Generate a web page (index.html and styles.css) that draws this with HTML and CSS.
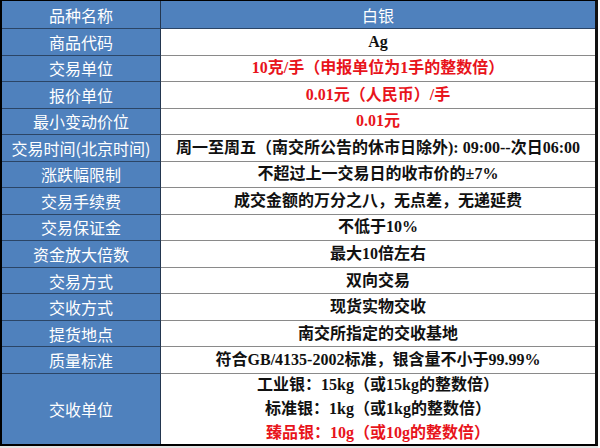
FILE: index.html
```html
<!DOCTYPE html>
<html lang="zh-CN">
<head>
<meta charset="utf-8">
<title>白银 合约</title>
<link rel="stylesheet" href="styles.css">
</head>
<body>
<div class="sheet">
  <div class="spec">
    <div class="k head">品种名称</div><div class="v head">白银</div>
    <div class="k">商品代码</div><div class="v">Ag</div>
    <div class="k">交易单位</div><div class="v red">10克/手（申报单位为1手的整数倍）</div>
    <div class="k">报价单位</div><div class="v red">0.01元（人民币）/手</div>
    <div class="k">最小变动价位</div><div class="v red">0.01元</div>
    <div class="k">交易时间(北京时间)</div><div class="v">周一至周五（南交所公告的休市日除外): 09:00--次日06:00</div>
    <div class="k">涨跌幅限制</div><div class="v">不超过上一交易日的收市价的±7%</div>
    <div class="k">交易手续费</div><div class="v">成交金额的万分之八，无点差，无递延费</div>
    <div class="k">交易保证金</div><div class="v">不低于10%</div>
    <div class="k">资金放大倍数</div><div class="v">最大10倍左右</div>
    <div class="k">交易方式</div><div class="v">双向交易</div>
    <div class="k">交收方式</div><div class="v">现货实物交收</div>
    <div class="k">提货地点</div><div class="v">南交所指定的交收基地</div>
    <div class="k">质量标准</div><div class="v">符合GB/4135-2002标准，银含量不小于99.99%</div>
    <div class="k last">交收单位</div>
    <div class="v last multi">
      <span>工业银：15kg（或15kg的整数倍）</span>
      <span>标准银：1kg（或1kg的整数倍）</span>
      <span class="red">臻品银：10g（或10g的整数倍）</span>
    </div>
  </div>
  <div class="strip"></div>
</div>
</body>
</html>
```

FILE: styles.css
```css
* { box-sizing: border-box; }
html, body { margin: 0; padding: 0; background: #ffffff; }
.sheet { width: 600px; height: 448px; overflow: hidden; }
.spec {
  width: 598px;
  display: grid;
  grid-template-columns: 159px 1fr;
  grid-template-rows: 28px repeat(13, 26.54px) 70px;
  border-top: 1px solid #000;
  border-left: 2px solid #000;
  border-right: 3px solid #111;
  border-bottom: 2px solid #000;
}
.k, .v {
  display: flex;
  align-items: center;
  justify-content: center;
  font-size: 16px;
  line-height: 1;
  white-space: nowrap;
}
.k {
  background: #4f81bd;
  color: #ffffff;
  font-family: "Noto Sans CJK SC", sans-serif;
  font-weight: 400;
  border-right: 1px solid #23364f;
  border-bottom: 1px solid #2b4566;
}
.v {
  background: #ffffff;
  color: #111111;
  font-family: "Liberation Serif", "Noto Sans CJK SC", serif;
  font-weight: 700;
  border-bottom: 1px solid #8a8a8a;
}
.v.head {
  background: #4f81bd;
  color: #ffffff;
  font-family: "Noto Sans CJK SC", sans-serif;
  font-weight: 400;
  border-bottom: 1px solid #2b4566;
}
.red { color: #e8141b; }
.last { border-bottom: none; }
.multi {
  flex-direction: column;
  gap: 8px;
}
.strip { height: 3px; width: 598px; background: #e3e3e3; }
```
